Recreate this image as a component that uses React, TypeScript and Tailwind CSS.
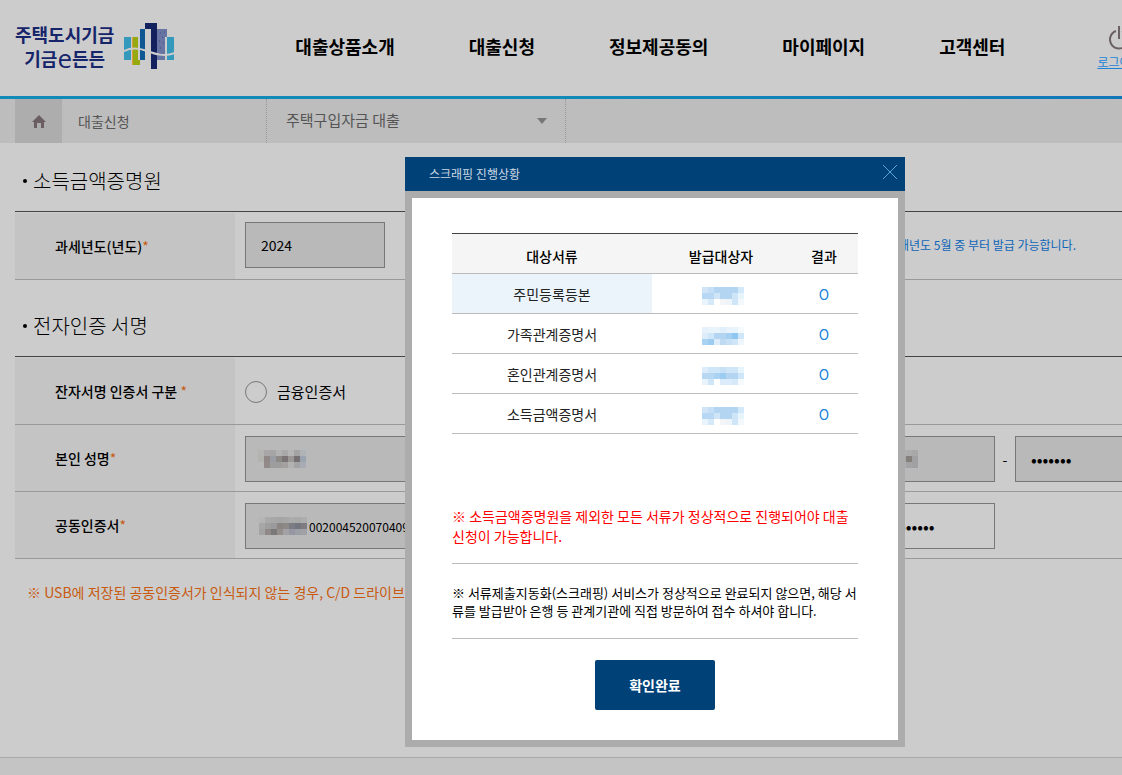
import type { ReactNode } from "react"

const menus = ["대출상품소개", "대출신청", "정보제공동의", "마이페이지", "고객센터"]

const blueA = [
  ["#d0e6f8", "#c4dff6", "#b3d5f2", "#b3d5f2", "#b3d5f2", "#b3d5f2", "#d4e9f9"],
  ["#b7d7f3", "#b7d7f3", "#cfe5f8", "#b3d5f2", "#b3d5f2", "#cfe5f8", "#e6f4fc"],
  ["#e8f3fc", "#d6e9f9", "#ffffff", "#f3f5f9", "#eef4f9", "#cfe5f8", "#f3f8fc"],
]

const blueB = [
  ["#e6f1fb", "#e8f3fc", "#e8f3fc", "#e0effb", "#e8f3fc", "#e8f3fc", "#f5fafd"],
  ["#dcecfa", "#cfe5f8", "#b3d5f2", "#b3d5f2", "#a6d0f2", "#8fc7f0", "#cfe5f8"],
  ["#a9d2f3", "#9dccf1", "#dcecfa", "#bfdbf4", "#c7e0f6", "#cfe5f8", "#eef6fc"],
]

const blueC = [
  ["#dcecfa", "#cfe5f8", "#cfe5f8", "#c7e0f6", "#cfe5f8", "#cfe5f8", "#e6f4fc"],
  ["#b7d7f3", "#b7d7f3", "#aad2f2", "#9dccf1", "#b3d5f2", "#b3d5f2", "#cfe5f8"],
  ["#e8f3fc", "#cfe5f8", "#ffffff", "#dcecfa", "#dcecfa", "#d6e9f9", "#f6fafd"],
]

const grayName = [
  ["#b4b4b3", "#a8a6a6", "#a5a5a6", "#b2b2b2", "#a9a9a9", "#b5b5b5", "#a3a3a4", "#b0b3b6"],
  ["#b2b2ae", "#8f8886", "#9a9ca3", "#8d8987", "#7a7476", "#9a9796", "#746f72", "#9aa3b0"],
  ["#bababa", "#928b89", "#9d9d9d", "#9d9d9d", "#a3a09f", "#b2b2b0", "#a3a3a6", "#a9adb3"],
]

const grayCert = [
  ["#b5b5b5", "#a9a9a9", "#a7a7a7", "#a5a5a5", "#a7a7a7", "#ababab", "#a9a9a9", "#adadad"],
  ["#a7a7a8", "#9e9e9f", "#9a9a9e", "#8a8583", "#8d8987", "#7c7c84", "#73757f", "#7e7c80"],
  ["#a3a3a4", "#8f8886", "#7a7878", "#948f8c", "#a1a1a6", "#9598a3", "#9d9fa7", "#a0a1a6"],
]

const grayId = [
  ["#a9a9a9", "#adadad", "#a9a9a9", "#adadad", "#a9a9a9", "#b0b0b0", "#acacad", "#a8a8a9"],
  ["#9d9d9d", "#8d8987", "#9d9d9d", "#8d8987", "#9d9d9d", "#aaaaaa", "#857f7b", "#a0a0a3"],
  ["#a9a9a9", "#a3a3a4", "#a9a9a9", "#a3a3a4", "#a9a9a9", "#afafaf", "#a3a3a5", "#a1a1a3"],
]

const documents = [
  { name: "주민등록등본", mask: blueA, active: true },
  { name: "가족관계증명서", mask: blueB, active: false },
  { name: "혼인관계증명서", mask: blueC, active: false },
  { name: "소득금액증명서", mask: blueA, active: false },
]

function Mosaic({ cells, className = "" }: { cells: string[][]; className?: string }) {
  return (
    <svg
      width={cells[0].length * 6}
      height={cells.length * 6}
      shapeRendering="crispEdges"
      aria-hidden="true"
      className={className}
    >
      {cells.map((row, y) =>
        row.map((color, x) => (
          <rect key={`${x}-${y}`} x={x * 6} y={y * 6} width="6" height="6" fill={color} />
        ))
      )}
    </svg>
  )
}

function Logo() {
  return (
    <a href="#" className="flex shrink-0 items-center gap-2.5 text-[#16246a]">
      <span className="block text-center text-lg leading-6 font-bold whitespace-nowrap">
        <span className="block">주택도시기금</span>
        <span className="flex items-center justify-center">
          기금<span className="font-['Open_Sans'] text-[26px] leading-6 font-normal">e</span>든든
        </span>
      </span>
      <svg width="51" height="46" viewBox="0 0 51 46" aria-hidden="true">
        <rect x="0" y="14" width="7" height="23" fill="#3499ba" />
        <path d="M9 14h5v23h2v5H9z" fill="#97a910" />
        <path d="M8 14h1v28H8z" fill="#d79a3c" />
        <rect x="16" y="6" width="5" height="31" fill="#0f5793" />
        <path d="M21 0h12v46h-6V6h-6z" fill="#14215f" />
        <path d="M33 6h10v8h-2v23h-8z" fill="#6874a1" />
        <path d="M36 10h1M40 9h1M38 14h1M35 18h1M39 20h1M36 25h1" stroke="#3d4a86" />
        <rect x="43" y="14" width="7" height="23" fill="#3499ba" />
        <path d="M0 28C8 24 15 25 23 28S40 34 51 30" fill="none" stroke="#cccccc" strokeWidth="2" />
      </svg>
    </a>
  )
}

function Label({ id, children, gap = false }: { id: string; children: ReactNode; gap?: boolean }) {
  return (
    <th scope="row" className="bg-[#c4c4c4] pl-10 text-left font-medium">
      <label htmlFor={id}>
        {children}
        {gap && " "}
        <span className="font-normal text-[#c85a10]">*</span>
      </label>
    </th>
  )
}

function SectionTitle({ children }: { children: ReactNode }) {
  return (
    <h2 className="flex items-center gap-1.5 pl-2 text-xl leading-7 font-light">
      <span className="size-1 rounded-full bg-black" />
      {children}
    </h2>
  )
}

function ScrapingDialog() {
  return (
    <div
      role="dialog"
      aria-labelledby="dialog-title"
      className="absolute top-[157px] left-[405px] w-[500px] bg-[#acacac]"
    >
      <div className="flex h-[34px] items-center justify-between bg-[#004178] pr-2 pl-6">
        <h2 id="dialog-title" className="text-xs text-[#ccd9e4]">
          스크래핑 진행상황
        </h2>
        <button type="button" aria-label="닫기" className="pb-1">
          <svg width="14" height="14" viewBox="0 0 14 14" stroke="#5ba3dc" aria-hidden="true">
            <path d="M0 0l14 14M14 0L0 14" />
          </svg>
        </button>
      </div>

      <div className="p-[7px]">
        <div className="bg-white px-10 pt-[35px] pb-[30px]">
          <table className="w-full table-fixed text-center text-sm">
            <thead>
              <tr className="h-10 border-t border-b border-t-[#444] border-b-[#bbb] bg-[#f5f5f5]">
                <th className="w-[200px] pt-1 font-medium">대상서류</th>
                <th className="pt-1 font-medium">발급대상자</th>
                <th className="w-[68px] pt-1 font-medium">결과</th>
              </tr>
            </thead>
            <tbody>
              {documents.map((doc) => (
                <tr key={doc.name} className="h-10 border-b border-[#bbb] text-[#222]">
                  <td className={doc.active ? "bg-[#ebf3fb]" : ""}>{doc.name}</td>
                  <td className="pt-1 pl-1">
                    <Mosaic cells={doc.mask} className="mx-auto" />
                  </td>
                  <td className="text-[#1c83d8]">O</td>
                </tr>
              ))}
            </tbody>
          </table>

          <p className="mt-[72px] border-b border-[#bbb] pb-[17px] text-sm leading-5 text-[#f00]">
            ※ 소득금액증명원을 제외한 모든 서류가 정상적으로 진행되어야 대출 신청이 가능합니다.
          </p>
          <p className="border-b border-[#bbb] pt-5 pb-[18px] text-[13px] leading-[18px]">
            ※ 서류제출지동화(스크래핑) 서비스가 정상적으로 완료되지 않으면, 해당 서류를 발급받아 은행 등 관계기관에 직접 방문하여 접수 하셔야 합니다.
          </p>

          <button
            type="button"
            className="mx-auto mt-[21px] block h-[50px] w-[120px] rounded-xs bg-[#004178] text-sm font-bold text-white"
          >
            확인완료
          </button>
        </div>
      </div>
    </div>
  )
}

export default function App() {
  return (
    <div className="relative flex min-h-screen flex-col overflow-hidden bg-[#ccc] font-['Noto_Sans_CJK_KR',sans-serif] text-black">
      {/* Header */}
      <header className="flex h-24 items-center pb-1 pl-[15px]">
        <Logo />
        <nav className="ml-[120px] flex shrink-0 gap-[74px] text-lg font-bold whitespace-nowrap">
          {menus.map((menu) => (
            <a key={menu} href="#">
              {menu}
            </a>
          ))}
        </nav>
        <a
          href="#"
          className="ml-[92px] flex shrink-0 flex-col items-center pt-1 text-xs whitespace-nowrap text-[#1c83d8] underline"
        >
          <svg width="20" height="24" viewBox="0 0 20 24" fill="none" stroke="#6b6062" strokeWidth="2" className="mb-1" aria-hidden="true">
            <path d="M7 5a9 9 0 1 0 6 0M10 0v13" />
          </svg>
          로그아웃
        </a>
      </header>

      {/* Breadcrumb */}
      <div className="h-[3px] bg-gradient-to-r from-[#118ab8] from-50% to-[#1277b9]" />
      <div className="flex h-11 bg-[#bdbdbd] pl-[15px] text-[#555]">
        <a href="#" aria-label="홈" className="flex w-[47px] items-center justify-center bg-[#adadad]">
          <svg width="14" height="13" viewBox="0 0 14 13" fill="#6b5e62" aria-hidden="true">
            <path d="M7 0l7 7h-2v6H9V8H5v5H2V7H0z" />
          </svg>
        </a>
        <a href="#" className="flex w-[205px] items-center border-r border-dotted border-[#999] pl-4 text-sm">
          대출신청
        </a>
        <div className="relative w-[299px] border-r border-dotted border-[#999]">
          <select aria-label="대출 종류" className="h-full w-full appearance-none pb-0.5 pl-[19px] text-[15px]">
            <option>주택구입자금 대출</option>
          </select>
          <svg width="10" height="6" viewBox="0 0 10 6" fill="#777" className="pointer-events-none absolute top-[19px] right-[18px]" aria-hidden="true">
            <path d="M0 0h10L5 6z" />
          </svg>
        </div>
      </div>

      <main className="grow pt-6 pl-[15px] text-sm">
        <SectionTitle>소득금액증명원</SectionTitle>
        <div className="mt-4 border-t border-[#444] pt-px">
          <table className="w-full table-fixed">
            <tbody>
              <tr className="h-[66px] border-b border-[#999]">
                <th scope="row" className="w-[220px] bg-[#c4c4c4] pl-10 text-left font-medium">
                  <label htmlFor="year">
                    과세년도(년도)<span className="font-normal text-[#c85a10]">*</span>
                  </label>
                </th>
                <td className="pb-0.5 pl-2.5">
                  <div className="flex items-center justify-between pr-[46px]">
                    <input
                      id="year"
                      defaultValue="2024"
                      className="h-[46px] w-[140px] border border-[#777] bg-[#b9b9b9] px-[15px]"
                    />
                    <span className="text-xs text-[#0d65b8]">매년도 5월 중 부터 발급 가능합니다.</span>
                  </div>
                </td>
              </tr>
            </tbody>
          </table>
        </div>

        <div className="pt-8">
          <SectionTitle>전자인증 서명</SectionTitle>
        </div>
        <div className="mt-4 border-t border-[#444] pt-px">
          <table className="w-full table-fixed">
            <colgroup>
              <col className="w-[220px]" />
              <col className="w-[610px]" />
              <col />
            </colgroup>
            <tbody>
              <tr className="h-[67px] border-b border-[#999]">
                <Label id="cert-type" gap>
                  잔자서명 인증서 구분
                </Label>
                <td colSpan={2} className="pt-0.5 pl-2.5">
                  <div className="flex items-center gap-2.5">
                    <input
                      id="cert-type"
                      type="radio"
                      className="size-[22px] appearance-none rounded-full border border-[#777]"
                    />
                    <label htmlFor="cert-type" className="text-[15px]">
                      금융인증서
                    </label>
                  </div>
                </td>
              </tr>
              <tr className="h-[67px] border-b border-[#999]">
                <Label id="user-name">본인 성명</Label>
                <td className="pt-0.5 pl-2.5">
                  <div className="relative w-[250px]">
                    <input id="user-name" className="block h-[46px] w-full border border-[#777] bg-[#b9b9b9]" />
                    <Mosaic cells={grayName} className="absolute top-3.5 left-[13px]" />
                  </div>
                </td>
                <td className="pt-0.5 pl-2.5">
                  <div className="flex items-center">
                    <div className="relative w-[140px] shrink-0">
                      <input
                        aria-label="주민등록번호 앞자리"
                        className="block h-[46px] w-full border border-[#777] bg-[#b9b9b9]"
                      />
                      <Mosaic cells={grayId} className="absolute top-3.5 left-[15px]" />
                    </div>
                    <span className="w-5 shrink-0 text-center">-</span>
                    <input
                      type="password"
                      aria-label="주민등록번호 뒷자리"
                      defaultValue="1234567"
                      className="h-[46px] w-[140px] shrink-0 border border-[#777] bg-[#b9b9b9] px-[15px] pb-0.5 text-[17px]"
                    />
                  </div>
                </td>
              </tr>
              <tr className="h-[67px] border-b border-[#999]">
                <Label id="cert">공동인증서</Label>
                <td className="pt-0.5 pl-2.5">
                  <div className="relative w-[250px]">
                    <input
                      id="cert"
                      defaultValue="002004520070409"
                      className="block h-[46px] w-full border border-[#777] bg-[#b9b9b9] pl-[63px] text-xs"
                    />
                    <Mosaic cells={grayCert} className="absolute top-3.5 left-[14px]" />
                  </div>
                </td>
                <td className="pt-0.5 pl-2.5">
                  <input
                    type="password"
                    aria-label="인증서 비밀번호"
                    defaultValue="12345678901"
                    className="block h-[46px] w-[140px] border border-[#777] px-[15px] pb-0.5 text-[17px]"
                  />
                </td>
              </tr>
            </tbody>
          </table>
        </div>
        <p className="mt-[23px] pl-3 whitespace-nowrap text-[#c85a10]">
          ※ USB에 저장된 공동인증서가 인식되지 않는 경우, C/D 드라이브에
        </p>
      </main>

      <footer className="h-[18px] border-t border-[#aaa] bg-[#c4c4c4]" />

      <ScrapingDialog />
    </div>
  )
}
